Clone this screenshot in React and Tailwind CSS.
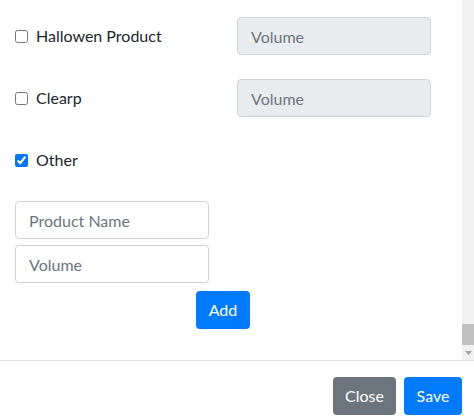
import { useState } from 'react'

const font = { fontFamily: '"Segoe UI", Lato, "Liberation Sans", sans-serif' }

function ProductRow({ label, checked, onToggle, showVolume }) {
  return (
    <div className="flex h-[38px] items-center">
      <label className="flex w-[222px] items-center text-[16px] text-[#212529]">
        <input
          type="checkbox"
          checked={checked}
          onChange={onToggle}
          className="m-0 h-[13px] w-[13px]"
        />
        <span className="ml-[8px]">{label}</span>
      </label>
      {showVolume && (
        <input
          disabled
          placeholder="Volume"
          className="h-[38px] w-[194px] rounded-[4px] border border-[#ced4da] bg-[#e9ecef] px-[13px] text-[16px] placeholder:text-[#6c757d]"
        />
      )}
    </div>
  )
}

export default function App() {
  const [checks, setChecks] = useState({ hallowen: false, clearp: false, other: true })
  const toggle = (k) => setChecks((c) => ({ ...c, [k]: !c[k] }))

  return (
    <div className="flex h-[417px] w-[474px] flex-col bg-white" style={font}>
      {/* Body with scrollbar */}
      <div className="flex h-[360px]">
        <div className="flex-1 pl-[15px]">
          <div className="mt-[17px]">
            <ProductRow label="Hallowen Product" checked={checks.hallowen} onToggle={() => toggle('hallowen')} showVolume />
          </div>
          <div className="mt-[24px]">
            <ProductRow label="Clearp" checked={checks.clearp} onToggle={() => toggle('clearp')} showVolume />
          </div>
          <div className="mt-[24px]">
            <ProductRow label="Other" checked={checks.other} onToggle={() => toggle('other')} />
          </div>

          {checks.other && (
            <div className="mt-[22px] flex flex-col">
              <input
                placeholder="Product Name"
                className="h-[38px] w-[194px] rounded-[4px] border border-[#ced4da] bg-white px-[13px] text-[16px] placeholder:text-[#6c757d]"
              />
              <input
                placeholder="Volume"
                className="mt-[6px] h-[38px] w-[194px] rounded-[4px] border border-[#ced4da] bg-white px-[13px] text-[16px] placeholder:text-[#6c757d]"
              />
              <button className="ml-[181px] mt-[8px] h-[38px] w-[54px] rounded-[4px] bg-[#007bff] text-[16px] text-white">
                Add
              </button>
            </div>
          )}
        </div>

        {/* Scrollbar */}
        <div className="flex w-[12px] flex-col bg-[#f1f1f1]">
          <div className="flex-1" />
          <div className="h-[21px] bg-[#c1c1c1]" />
          <div className="flex h-[15px] items-center justify-center">
            <svg width="7" height="4" viewBox="0 0 7 4">
              <path d="M0 0h7L3.5 4z" fill="#a3a3a3" />
            </svg>
          </div>
        </div>
      </div>

      {/* Footer */}
      <div className="flex flex-1 items-start justify-end gap-[8px] border-t border-[#dee2e6] pr-[12px] pt-[16px]">
        <button className="h-[38px] w-[63px] rounded-[4px] bg-[#6c757d] text-[16px] text-white">Close</button>
        <button className="h-[38px] w-[58px] rounded-[4px] bg-[#007bff] text-[16px] text-white">Save</button>
      </div>
    </div>
  )
}
